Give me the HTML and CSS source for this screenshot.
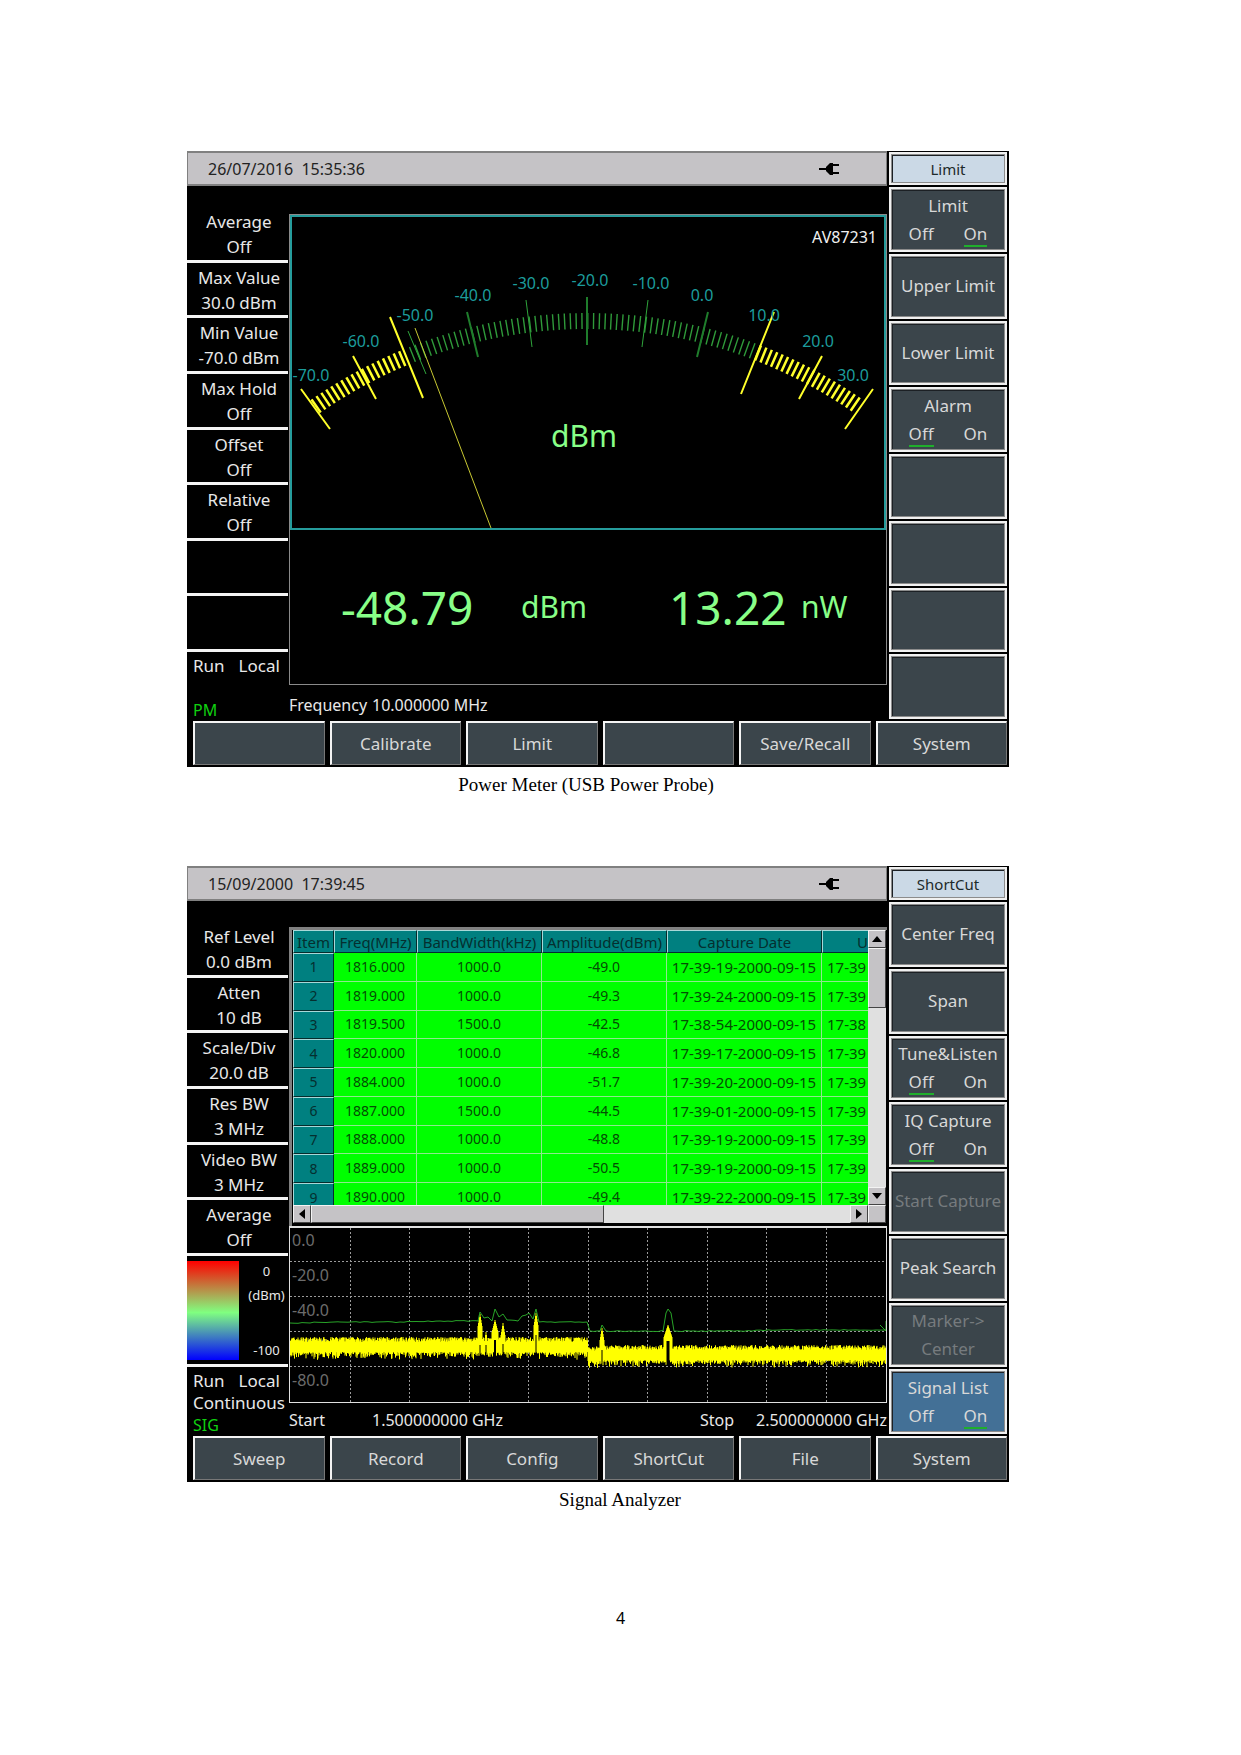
FILE: index.html
```html
<!DOCTYPE html>
<html lang="en">
<head>
<meta charset="utf-8">
<title>Power Meter and Signal Analyzer</title>
<link rel="stylesheet" href="styles.css">
</head>
<body>
<main class="page">
  <figure class="figure">
    <div class="device">
      <div class="body">
        <div class="main">
          <header class="titlebar">
            <time>26/07/2016&nbsp; 15:35:36</time>
            <svg class="plug" viewBox="0 0 20 16" width="20" height="16"><path d="M0 7h7v2H0zM7 6l4-4h3v1h6v2h-6v6h6v2h-6v1h-3L7 10z"/></svg>
          </header>
          <div class="content">
            <div class="side">
              <div class="params">
                <div class="param"><span>Average</span><span>Off</span></div>
                <div class="param"><span>Max Value</span><span>30.0 dBm</span></div>
                <div class="param"><span>Min Value</span><span>-70.0 dBm</span></div>
                <div class="param"><span>Max Hold</span><span>Off</span></div>
                <div class="param"><span>Offset</span><span>Off</span></div>
                <div class="param"><span>Relative</span><span>Off</span></div>
                <div class="param"></div>
                <div class="param"></div>
              </div>
              <div class="status">
                <div class="run"><span>Run</span><span>Local</span></div>
                <div></div>
                <div class="mode">PM</div>
              </div>
            </div>
            <div class="center">
              <div class="meter">
                <svg class="dial" viewBox="292 218 592 311">
                  <g fill="none" stroke-width="16">
                    <path class="arc-limit" d="M315.1 407.7A474 474 0 0 1 406.4 357.8"/>
                    <path class="arc-ok" d="M411.8 355.6A474 474 0 0 1 756.9 353.5"/>
                    <path class="arc-limit" d="M756.9 353.5A474 474 0 0 1 858.9 407.7"/>
                  </g>
                  <g stroke="#2fa53c" stroke-width="1">
                    <path d="M408 332L426 375M526 301L532 348M648 301L642 348"/>
                    <path d="M467 313L478 358M587 298V346M708 313L697 358" stroke-width="2" stroke="#1f7d2c"/>
                  </g>
                  <path d="M301 390L330 430M353 357L376 400M390 318L423 399M774 313L741 395M822 357L799 400M873 390L845 430" stroke="#ffff2a" stroke-width="2"/>
                  <path d="M415 329L491 529" stroke="#c8c832" stroke-width="1"/>
                  <g class="scale">
                    <text x="311" y="382">-70.0</text>
                    <text x="361" y="348">-60.0</text>
                    <text x="415" y="322">-50.0</text>
                    <text x="473" y="302">-40.0</text>
                    <text x="531" y="290">-30.0</text>
                    <text x="590" y="287">-20.0</text>
                    <text x="651" y="290">-10.0</text>
                    <text x="702" y="302">0.0</text>
                    <text x="764" y="322">10.0</text>
                    <text x="818" y="348">20.0</text>
                    <text x="853" y="382">30.0</text>
                  </g>
                  <text class="dial-unit" x="584" y="448">dBm</text>
                  <text class="probe" x="877" y="244">AV87231</text>
                </svg>
                <div class="readings">
                  <span class="big">-48.79</span><span class="unit">dBm</span>
                  <span class="big">13.22</span><span class="unit">nW</span>
                </div>
              </div>
              <div class="footer"><span class="name">Frequency</span><span class="number">10.000000 MHz</span></div>
            </div>
          </div>
        </div>
        <div class="keys">
          <div class="keys-title">Limit</div>
          <button class="key">Limit<span class="pair"><span>Off</span><span class="on">On</span></span></button>
          <button class="key">Upper Limit</button>
          <button class="key">Lower Limit</button>
          <button class="key">Alarm<span class="pair"><span class="on">Off</span><span>On</span></span></button>
          <button class="key" aria-label="Empty"></button>
          <button class="key" aria-label="Empty"></button>
          <button class="key" aria-label="Empty"></button>
          <button class="key" aria-label="Empty"></button>
        </div>
      </div>
      <nav class="menu">
        <button aria-label="Empty"></button><button>Calibrate</button><button>Limit</button>
        <button aria-label="Empty"></button><button>Save/Recall</button><button>System</button>
      </nav>
    </div>
    <figcaption class="caption caption-left">Power Meter (USB Power Probe)</figcaption>
  </figure>

  <figure class="figure">
    <div class="device">
      <div class="body">
        <div class="main">
          <header class="titlebar">
            <time>15/09/2000&nbsp; 17:39:45</time>
            <svg class="plug" viewBox="0 0 20 16" width="20" height="16"><path d="M0 7h7v2H0zM7 6l4-4h3v1h6v2h-6v6h6v2h-6v1h-3L7 10z"/></svg>
          </header>
          <div class="content">
            <div class="side">
              <div class="params">
                <div class="param"><span>Ref Level</span><span>0.0 dBm</span></div>
                <div class="param"><span>Atten</span><span>10 dB</span></div>
                <div class="param"><span>Scale/Div</span><span>20.0 dB</span></div>
                <div class="param"><span>Res BW</span><span>3 MHz</span></div>
                <div class="param"><span>Video BW</span><span>3 MHz</span></div>
                <div class="param"><span>Average</span><span>Off</span></div>
                <div class="param legend">
                  <div class="spectrum"></div>
                  <div class="legend-labels"><span>0</span><span>(dBm)</span><span class="low">-100</span></div>
                </div>
              </div>
              <div class="status">
                <div class="run"><span>Run</span><span>Local</span></div>
                <div>Continuous</div>
                <div class="mode">SIG</div>
              </div>
            </div>
            <div class="center center-list">
              <div class="list">
                <div class="list-view">
                  <table>
                    <colgroup><col class="c-item"><col class="c-freq"><col class="c-band"><col class="c-amp"><col><col class="c-cut"></colgroup>
                    <thead><tr><th>Item</th><th>Freq(MHz)</th><th>BandWidth(kHz)</th><th>Amplitude(dBm)</th><th>Capture Date</th><th class="cut-head">U</th></tr></thead>
                    <tbody>
                      <tr><th>1</th><td>1816.000</td><td>1000.0</td><td>-49.0</td><td class="date">17-39-19-2000-09-15</td><td class="cut">17-39</td></tr>
                      <tr><th>2</th><td>1819.000</td><td>1000.0</td><td>-49.3</td><td class="date">17-39-24-2000-09-15</td><td class="cut">17-39</td></tr>
                      <tr><th>3</th><td>1819.500</td><td>1500.0</td><td>-42.5</td><td class="date">17-38-54-2000-09-15</td><td class="cut">17-38</td></tr>
                      <tr><th>4</th><td>1820.000</td><td>1000.0</td><td>-46.8</td><td class="date">17-39-17-2000-09-15</td><td class="cut">17-39</td></tr>
                      <tr><th>5</th><td>1884.000</td><td>1000.0</td><td>-51.7</td><td class="date">17-39-20-2000-09-15</td><td class="cut">17-39</td></tr>
                      <tr><th>6</th><td>1887.000</td><td>1500.0</td><td>-44.5</td><td class="date">17-39-01-2000-09-15</td><td class="cut">17-39</td></tr>
                      <tr><th>7</th><td>1888.000</td><td>1000.0</td><td>-48.8</td><td class="date">17-39-19-2000-09-15</td><td class="cut">17-39</td></tr>
                      <tr><th>8</th><td>1889.000</td><td>1000.0</td><td>-50.5</td><td class="date">17-39-19-2000-09-15</td><td class="cut">17-39</td></tr>
                      <tr><th>9</th><td>1890.000</td><td>1000.0</td><td>-49.4</td><td class="date">17-39-22-2000-09-15</td><td class="cut">17-39</td></tr>
                    </tbody>
                  </table>
                </div>
                <div class="bar bar-v">
                  <button aria-label="Scroll up"><svg width="10" height="6"><path d="M0 6L5 0l5 6z"/></svg></button>
                  <div class="thumb"></div>
                  <button class="end" aria-label="Scroll down"><svg width="10" height="6"><path d="M0 0h10L5 6z"/></svg></button>
                </div>
                <div class="bar bar-h">
                  <button aria-label="Scroll left"><svg width="6" height="10"><path d="M6 0v10L0 5z"/></svg></button>
                  <div class="thumb"></div>
                  <button class="end" aria-label="Scroll right"><svg width="6" height="10"><path d="M0 0l6 5-6 5z"/></svg></button>
                </div>
                <div class="corner"></div>
              </div>
              <svg class="plot" viewBox="290 1228 596 174">
                <path class="grid" d="M290 1261.5H886M290 1296.5H886M290 1331.5H886M290 1366.5H886M350.5 1228V1402M409.5 1228V1402M469.5 1228V1402M528.5 1228V1402M588.5 1228V1402M647.5 1228V1402M707.5 1228V1402M766.5 1228V1402M826.5 1228V1402"/>
                <g class="axis">
                  <text x="292" y="1246">0.0</text>
                  <text x="292" y="1281">-20.0</text>
                  <text x="292" y="1316">-40.0</text>
                  <text x="292" y="1351">-60.0</text>
                  <text x="292" y="1386">-80.0</text>
                </g>
                <path id="live" stroke="#ffff00" fill="none"/>
                <path id="hold" stroke="#28a428" fill="none"/>
              </svg>
              <div class="footer"><span class="name">Start</span><span class="number">1.500000000 GHz</span><span class="stop">Stop</span><span class="number">2.500000000 GHz</span></div>
            </div>
          </div>
        </div>
        <div class="keys">
          <div class="keys-title">ShortCut</div>
          <button class="key">Center Freq</button>
          <button class="key">Span</button>
          <button class="key">Tune&amp;Listen<span class="pair"><span class="on">Off</span><span>On</span></span></button>
          <button class="key">IQ Capture<span class="pair"><span class="on">Off</span><span>On</span></span></button>
          <button class="key" disabled>Start Capture</button>
          <button class="key">Peak Search</button>
          <button class="key" disabled>Marker-&gt;<br>Center</button>
          <button class="key active">Signal List<span class="pair"><span>Off</span><span class="on">On</span></span></button>
        </div>
      </div>
      <nav class="menu">
        <button>Sweep</button><button>Record</button><button>Config</button>
        <button>ShortCut</button><button>File</button><button>System</button>
      </nav>
    </div>
    <figcaption class="caption caption-right">Signal Analyzer</figcaption>
  </figure>
  <footer class="page-number">4</footer>
</main>
<script src="plot.js"></script>
</body>
</html>
```
FILE: styles.css
```css
* { box-sizing: border-box; }
body { margin: 0; background: #fff; font-family: "Noto Sans", "Open Sans", sans-serif; }
button { font: inherit; margin: 0; padding: 0; border: 0; border-radius: 0; }
.page { padding: 151px 232px 100px 187px; }
.figure { margin: 0 0 71px; }
.device { background: #000; color: #e8e8e8; font-size: 17px; padding-bottom: 2px; }
.body { display: grid; grid-template-columns: minmax(0, 1fr) 118px; gap: 2px; padding-right: 2px; min-height: 570px; }
.main { display: flex; flex-direction: column; }

.titlebar { display: flex; align-items: center; justify-content: space-between; height: 35px; padding: 0 47px 0 20px; background: #c5c3c6; border: 2px solid #808080; border-right-width: 1px; border-left-width: 1px; color: #222; font-size: 16px; }
.plug { fill: #000; }

.content { flex: 1; display: grid; grid-template-columns: 101px minmax(0, 1fr); gap: 1px; }
.side { display: flex; flex-direction: column; padding-top: 21px; }
.params { display: grid; grid-template-rows: repeat(8, minmax(0, 1fr)); height: 445px; }
.param { display: flex; flex-direction: column; text-align: center; line-height: 25px; padding: 2px 0 0 3px; border-bottom: 3px solid #f4f4f4; white-space: nowrap; }
.status { flex: 1; padding: 3px 0 0 6px; line-height: 22px; display: grid; grid-template-rows: repeat(3, 22px); align-content: start; white-space: nowrap; }
.run { display: flex; gap: 14px; }
.mode { color: #10d010; font-size: 16px; }

.center { display: flex; flex-direction: column; padding-top: 28px; }
.meter { border: 1px solid #8a8a8a; }
.dial { display: block; width: 100%; height: auto; border: 2px solid #259c9c; }
.arc-ok { stroke: #2f9a3a; stroke-dasharray: 1.4 4.39; }
.arc-limit { stroke: #ffff2a; stroke-dasharray: 2.5 3.29; }
.scale { fill: #1c9c9c; font-size: 16px; text-anchor: middle; }
.dial-unit { fill: #88ff88; font-size: 30px; text-anchor: middle; }
.probe { fill: #f0f0f0; font-size: 16px; text-anchor: end; }
.readings { display: grid; grid-template-columns: 180fr 148fr 132fr 85fr; align-items: center; height: 154px; padding-left: 51px; color: #88ff88; }
.big { font-size: 46px; line-height: 60px; }
.unit { font-size: 30px; line-height: 40px; }
.footer { flex: 1; display: flex; align-items: flex-end; padding-bottom: 5px; line-height: 22px; white-space: nowrap; font-size: 16px; }
.footer .name { width: 83px; }
.footer .stop { margin: 0 22px 0 auto; }

.keys { display: grid; grid-template-rows: 33px repeat(8, 1fr); gap: 2px; padding: 1px 0 2px; }
.keys-title, .key { border: 2px solid #f0f0f0; box-shadow: inset 0 0 0 1px #8c8c8c, inset 2px 2px 0 #1c2024; }
.keys-title { display: flex; align-items: center; justify-content: center; background: #cbd9e6; color: #1d2a2a; font-size: 15px; }
.key { display: flex; flex-direction: column; align-items: center; justify-content: center; background: #3b454b; color: #d8d8d8; line-height: 28px; white-space: nowrap; }
.key:disabled { color: #767b7e; }
.key.active { background: #437096; }
.pair { display: flex; gap: 30px; }
.pair span { height: 27px; }
.pair .on { border-bottom: 2px solid #1fae2c; }

.menu { display: grid; grid-template-columns: repeat(6, 1fr); gap: 5px; padding: 0 2px 0 6px; }
.menu button { height: 44px; background: #3b454b; color: #d8d8d8; border: solid; border-width: 2px 1px 1px 2px; border-color: #f4f4f4 #777 #777 #f4f4f4; }

.spectrum { width: 52px; background: linear-gradient(#ff0000, #80ff80 52%, #0000ff); }
.legend { grid-row: span 2; flex-direction: row; padding: 5px 0 4px; }
.legend-labels { flex: 1; display: flex; flex-direction: column; font-size: 13px; line-height: 20px; gap: 4px; padding-left: 6px; }
.legend-labels .low { margin-top: auto; }

.center-list { padding-top: 26px; }
.list { display: grid; grid-template-columns: minmax(0, 1fr) 18px; grid-template-rows: 275px 18px; border: solid #808080; border-width: 3px 0 0 3px; padding: 0 1px 3px 1px; }
.list-view { overflow: hidden; }
table { width: 100%; height: 282px; table-layout: fixed; border-collapse: separate; border-spacing: 0; color: #044d04; font-size: 14px; text-align: center; white-space: nowrap; }
.c-item { width: 41px; }
.c-freq { width: 83px; }
.c-band, .c-amp { width: 125px; }
.c-cut { width: 46px; }
th, td { padding: 0; font-weight: 400; }
td { background: #00ff00; border: solid #8fe88f; border-width: 0 1px 1px 0; line-height: 20px; }
th { background: #008080; color: #052f2f; border: solid; border-width: 1px; border-color: #a8d8d8 #062c2c #062c2c #a8d8d8; line-height: 20px; }
thead tr { height: 23px; }
thead th { height: 23px; font-size: 15px; }
.date { font-size: 15px; }
.cut { font-size: 15px; text-align: left; padding-left: 5px; border-right: 0; }
.cut-head { text-align: right; border-right: 0; }
.bar { display: flex; background: #e0e0e0; }
.bar-v { flex-direction: column; }
.bar button, .thumb, .corner { background: #c5c3c6; border: 1px solid; border-color: #f4f4f4 #444 #444 #f4f4f4; }
.bar button { display: flex; align-items: center; justify-content: center; width: 18px; height: 18px; }
.bar .end { margin: auto 0 0 auto; }
.bar-v .thumb { height: 60px; }
.bar-h .thumb { width: 51%; }

.plot { display: block; width: 100%; height: auto; border: 1px solid #e0e0e0; border-top-width: 2px; }
.grid { stroke: #9a9a9a; stroke-dasharray: 2 2; }
.axis { fill: #6c6c6c; font-size: 16px; }

.caption { font-family: "Liberation Serif", serif; font-size: 19px; line-height: 20px; padding-top: 8px; text-align: center; color: #000; }
.caption-left { padding-right: 24px; }
.caption-right { padding-left: 44px; }
.page-number { padding: 25px 0 0 45px; text-align: center; font-size: 16px; line-height: 24px; }
```
FILE: plot.js
```js
// Draws the live trace and the max-hold trace of the analyzer plot.
let seed = 7;
const rand = () => (seed = (seed * 16807) % 2147483647) / 2147483647;

// x, top, half width, foot of each signal
const peaks = [
  [480, 1314, 2, 1345], [486, 1332, 2, 1345], [495, 1320, 3, 1340],
  [503, 1323, 2, 1344], [536, 1313, 2, 1335], [602, 1328, 2, 1350],
  [668, 1325, 4, 1341],
];

let live = "";
for (let x = 290; x < 886; x += 0.5) {
  const mid = x < 588 ? 1347 : x < 600 ? 1356 : 1355;
  let top = mid - 5 - rand() * 5;
  let bottom = mid + 5 + rand() * rand() * 8;
  for (const [px, py, w, foot] of peaks) {
    const d = Math.abs(x - px);
    if (d <= w) {
      top = py + (d / w) * 12;
      bottom = d < w / 2 ? foot : bottom;
    }
  }
  live += `M${x} ${top.toFixed(1)}V${bottom.toFixed(1)}`;
}
document.getElementById("live").setAttribute("d", live);

const points = [
  [290, 1323], [340, 1322], [400, 1322], [440, 1321], [478, 1321], [480, 1312],
  [484, 1318], [488, 1317], [492, 1321], [495, 1309], [499, 1317], [503, 1314],
  [507, 1320], [518, 1321], [522, 1316], [526, 1315], [529, 1313], [533, 1319],
  [536, 1309], [539, 1322], [587, 1322], [590, 1331], [600, 1331], [602, 1325],
  [606, 1331], [663, 1331], [666, 1313], [668, 1309], [671, 1313], [674, 1331],
  [740, 1331], [780, 1330], [886, 1330],
];
let hold = `M${points[0]}`;
for (let i = 1; i < points.length; i++) {
  const [x0, y0] = points[i - 1];
  const [x1, y1] = points[i];
  for (let x = x0 + 4; x < x1; x += 4) {
    const y = y0 + ((y1 - y0) * (x - x0)) / (x1 - x0) + rand() - 0.5;
    hold += `L${x} ${y.toFixed(1)}`;
  }
  hold += `L${x1} ${y1}`;
}
document.getElementById("hold").setAttribute("d", hold + "M880 1325L886 1331V1321");
```
